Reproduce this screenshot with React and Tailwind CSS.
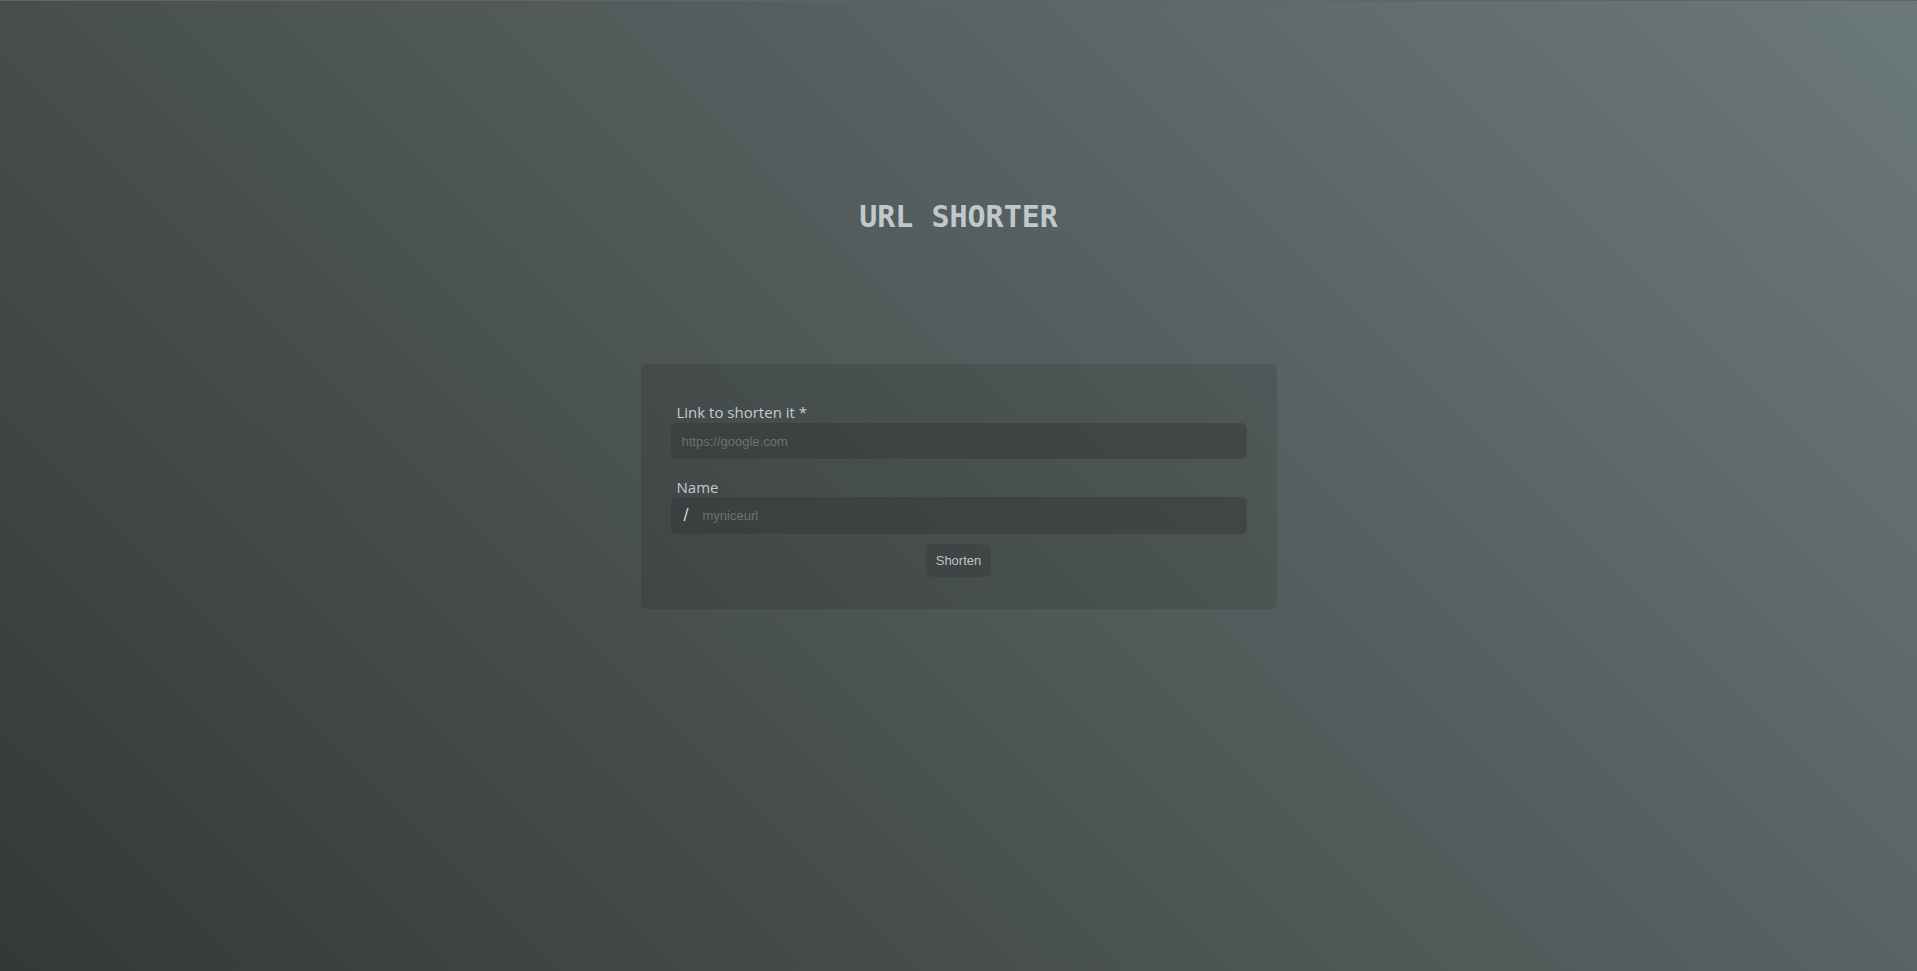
import React, { useState } from 'react';

const App = () => {
  const [url, setUrl] = useState('');
  const [name, setName] = useState('');

  return (
    <div className="min-h-screen w-full border-t border-[#646264] bg-[linear-gradient(45deg,#353838,#6c7979)] font-['Open_Sans','Noto_Sans',sans-serif]">
      <div className="flex flex-col items-center pt-[198px]">
        <h1 className="font-['DejaVu_Sans_Mono',monospace] text-[30px] leading-[36px] font-bold tracking-normal text-[#c1c8cc]">
          URL SHORTER
        </h1>

        {/* Form card */}
        <form
          className="mt-[129px] w-[636px] rounded-md bg-black/10 px-[30px] pt-[38px] pb-[32px]"
          onSubmit={(e) => e.preventDefault()}
        >
          <label className="ml-[6px] block text-[15px] leading-[21px] text-[#c3cacf]">
            Link to shorten it *
          </label>
          <input
            type="text"
            value={url}
            onChange={(e) => setUrl(e.target.value)}
            placeholder="https://google.com"
            className="block h-[36px] w-full rounded-md bg-[rgba(51,51,51,0.43)] px-[11px] font-['Liberation_Sans',sans-serif] text-[13px] text-[#c3cacf] outline-none placeholder:text-[#6d7272]"
          />

          <label className="mt-[18px] ml-[6px] block text-[15px] leading-[20px] text-[#c3cacf]">
            Name
          </label>
          <div className="flex h-[37px] w-full items-center rounded-md bg-[rgba(51,51,51,0.43)] pl-[13px]">
            <span className="font-['Liberation_Sans',sans-serif] text-[18px] text-[#cdd6de]">/</span>
            <input
              type="text"
              value={name}
              onChange={(e) => setName(e.target.value)}
              placeholder="myniceurl"
              className="ml-[14px] h-full flex-1 bg-transparent font-['Liberation_Sans',sans-serif] text-[13px] text-[#c3cacf] outline-none placeholder:text-[#6d7272]"
            />
          </div>

          <div className="mt-[10px] flex justify-center">
            <button
              type="submit"
              className="h-[33px] rounded-md bg-[rgba(51,51,51,0.35)] px-[10px] font-['Liberation_Sans',sans-serif] text-[13px] text-[#bcc4ca]"
            >
              Shorten
            </button>
          </div>
        </form>
      </div>
    </div>
  );
};

export default App;
